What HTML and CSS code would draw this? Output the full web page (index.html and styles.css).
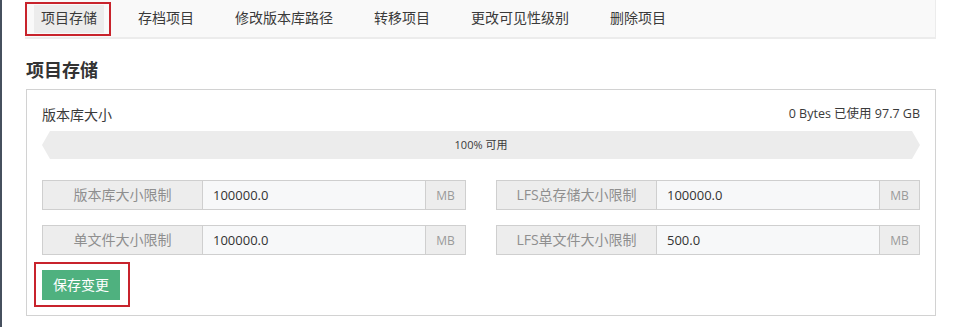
FILE: index.html
```html
<!DOCTYPE html>
<html lang="zh-CN">
<head>
<meta charset="UTF-8" />
<meta name="viewport" content="width=device-width, initial-scale=1.0"/>
<title>项目存储</title>
<link rel="stylesheet" href="styles.css">
</head>
<body>
  <div class="edge"></div>

  <div class="main">
    <nav class="tabs">
      <span class="mark mark-tab"><a class="tab active">项目存储</a></span>
      <a class="tab">存档项目</a>
      <a class="tab">修改版本库路径</a>
      <a class="tab">转移项目</a>
      <a class="tab">更改可见性级别</a>
      <a class="tab">删除项目</a>
    </nav>

    <h2 class="title">项目存储</h2>

    <div class="panel">
      <div class="size-row">
        <span>版本库大小</span>
        <span class="used">0 Bytes 已使用 97.7 GB</span>
      </div>
      <div class="bar">100% 可用</div>

      <div class="grid">
        <div class="group">
          <span class="label">版本库大小限制</span>
          <input class="value" type="text" value="100000.0">
          <span class="unit">MB</span>
        </div>
        <div class="group">
          <span class="label">LFS总存储大小限制</span>
          <input class="value" type="text" value="100000.0">
          <span class="unit">MB</span>
        </div>
        <div class="group">
          <span class="label">单文件大小限制</span>
          <input class="value" type="text" value="100000.0">
          <span class="unit">MB</span>
        </div>
        <div class="group">
          <span class="label">LFS单文件大小限制</span>
          <input class="value" type="text" value="500.0">
          <span class="unit">MB</span>
        </div>
      </div>

      <div class="actions">
        <span class="mark mark-btn"><button class="save">保存变更</button></span>
      </div>
    </div>
  </div>
</body>
</html>
```

FILE: styles.css
```css
body {
  margin: 0;
  display: flex;
  height: 327px;
  overflow: hidden;
  background-color: #fff;
  color: #3a3a3a;
  font-family: 'Open Sans', 'Noto Sans CJK SC', sans-serif;
  font-size: 13px;
}

.edge {
  width: 2px;
  background-color: #46505e;
}

.main {
  flex: 1;
  padding: 0 24px 0 23px;
}

.tabs {
  display: flex;
  align-items: flex-start;
  gap: 27px;
  height: 37px;
  background-color: #f9f9f9;
  border-bottom: 2px solid #ececec;
  border-right: 1px solid #ececec;
}

.tabs > .tab {
  margin-top: 5px;
}

.tab {
  display: flex;
  align-items: center;
  box-sizing: border-box;
  height: 28px;
  padding: 0 7px 4px;
  font-family: 'Noto Sans CJK SC', sans-serif;
  font-size: 14px;
  color: #3a3a3a;
}

.tab.active {
  background-color: #ececec;
}

.mark {
  display: inline-flex;
  border: 2px solid #c8232c;
}

.mark-tab {
  margin-top: 2px;
  padding: 1px 5px 1px 7px;
  margin-right: -7px;
}

.title {
  margin: 18px 0 8px 1px;
  font-family: 'Noto Sans CJK SC', sans-serif;
  font-size: 18px;
  line-height: 24px;
  font-weight: bold;
  color: #333;
}

.panel {
  margin-left: 1px;
  border: 1px solid #d2d2d2;
  padding: 14px 15px 8px;
}

.size-row {
  display: flex;
  justify-content: space-between;
  line-height: 20px;
}

.size-row span:first-child {
  font-family: 'Noto Sans CJK SC', sans-serif;
  font-size: 14px;
}

.used {
  font-size: 12.5px;
}

.bar {
  margin-top: 7px;
  height: 28px;
  line-height: 28px;
  background-color: #ececec;
  text-align: center;
  font-size: 11px;
  clip-path: polygon(8px 0, calc(100% - 8px) 0, 100% 50%, calc(100% - 8px) 100%, 8px 100%, 0 50%);
}

.grid {
  display: grid;
  grid-template-columns: 1fr 1fr;
  column-gap: 30px;
  row-gap: 15px;
  margin-top: 21px;
}

.group {
  display: flex;
  height: 28px;
  border: 1px solid #cfcfcf;
}

.label {
  width: 159px;
  display: flex;
  align-items: center;
  justify-content: center;
  padding-bottom: 2px;
  background-color: #ededed;
  border-right: 1px solid #cfcfcf;
  color: #8f8f8f;
  font-size: 14px;
}

.value {
  flex: 1;
  min-width: 0;
  border: none;
  outline: none;
  padding: 0 10px;
  background-color: #f7f8f9;
  color: #333;
  font-family: 'Open Sans', sans-serif;
  font-size: 13px;
}

.unit {
  width: 39px;
  display: flex;
  align-items: center;
  justify-content: center;
  background-color: #ededed;
  border-left: 1px solid #cfcfcf;
  color: #9a9a9a;
  font-size: 12px;
}

.actions {
  margin-top: 7px;
}

.mark-btn {
  margin-left: -8px;
  padding: 6px 8px 5px 6px;
}

.save {
  height: 30px;
  padding: 0 11px 2px;
  border: none;
  background-color: #4fb17f;
  color: #fff;
  font-family: 'Noto Sans CJK SC', sans-serif;
  font-size: 14px;
}
```
